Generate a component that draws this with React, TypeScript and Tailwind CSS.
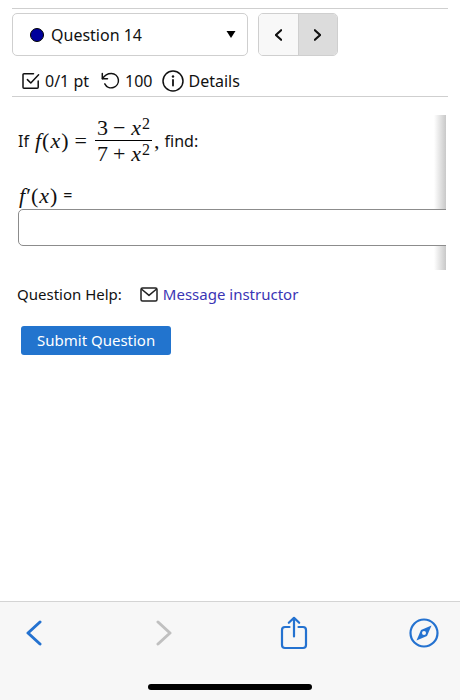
import type { ReactNode } from "react";

const CheckIcon = () => (
    <svg className="w-[18px] h-[18px]" viewBox="0 0 18 18" fill="none" stroke="currentColor" strokeWidth="1.5" strokeLinecap="round" strokeLinejoin="round" aria-hidden="true">
        <path d="M11.5 1.7H2a1 1 0 0 0-1 1v12.600a1 1 0 0 0 1 1h13.200a1 1 0 0 0 1-1V9" />
        <path d="M5.4 7.6l3.400 3.400L16.600 2.800" />
    </svg>
);

const RetryIcon = () => (
    <svg className="w-[19px] h-[18px]" viewBox="0 0 19 18" fill="none" stroke="currentColor" strokeWidth="1.5" strokeLinecap="round" strokeLinejoin="round" aria-hidden="true">
        <path d="M1.300 1.6v5.200h5.200" />
        <path d="M1.500 6.600C3.600 3 6.800 1.400 10.400 1.400a7.200 7.200 0 1 1-6.600 10.400" />
    </svg>
);

const InfoIcon = () => (
    <svg className="w-[22px] h-[22px]" viewBox="0 0 22 22" fill="none" stroke="currentColor" strokeWidth="1.5" strokeLinecap="round" aria-hidden="true">
        <circle cx="11" cy="11" r="10" />
        <path d="M11 10v5.500" strokeWidth="1.800" />
        <circle cx="11" cy="6.500" r="1.200" fill="currentColor" stroke="none" />
    </svg>
);

const MailIcon = () => (
    <svg className="w-[18px] h-[15px]" viewBox="0 0 18 15" fill="none" stroke="#222" strokeWidth="1.5" strokeLinejoin="round" aria-hidden="true">
        <rect x="1" y="1" width="16" height="13" rx="1.500" />
        <path d="M1.400 2l7.600 6.400L16.600 2" />
    </svg>
);

const Chevron = ({ d, className, width }: { d: string; className: string; width: number }) => (
    <svg className={className} viewBox="0 0 16 26" fill="none" stroke="currentColor" strokeWidth={width} strokeLinecap="round" strokeLinejoin="round" aria-hidden="true">
        <path d={d} />
    </svg>
);

const LEFT = "M14 2L2 13l12 11";
const RIGHT = "M2 2l12 11L2 24";

const Var = ({ children }: { children: ReactNode }) => <i className="px-px italic">{children}</i>;

const Term = ({ number, sign }: { number: string; sign: string }) => (
    <span className="flex items-start gap-[5px] leading-[25px]">
        <span>{number}</span>
        <span>{sign}</span>
        <span className="flex items-start">
            <Var>x</Var>
            <sup className="top-0 text-base leading-[18px]">2</sup>
        </span>
    </span>
);

const QuestionNav = () => (
    <div className="flex gap-[10px] pt-1">
        <label className="flex h-[43px] w-[236px] items-center rounded-[5px] border border-[#cfcfcf] pl-[17px] pr-[11px]">
            <span className="mr-[7px] h-[14px] w-[14px] rounded-full border border-black bg-[#00009c]" />
            <select aria-label="Question" className="min-w-0 flex-1 appearance-none bg-transparent">
                <option>Question 14</option>
            </select>
            <svg className="h-[7px] w-[10px]" viewBox="0 0 10 7" aria-hidden="true">
                <path d="M0.500 0h9L5 7z" />
            </svg>
        </label>
        <div className="flex h-[43px] w-20 overflow-hidden rounded-[5px] border border-[#cfcfcf]">
            <button type="button" aria-label="Previous question" className="flex flex-1 items-center justify-center bg-[#f8f8f8]">
                <Chevron d={LEFT} width={5} className="h-3 w-[7px]" />
            </button>
            <button type="button" aria-label="Next question" className="flex flex-1 items-center justify-center border-l border-[#cfcfcf] bg-[#dcdcdc]">
                <Chevron d={RIGHT} width={5} className="h-3 w-[7px]" />
            </button>
        </div>
    </div>
);

const Question = () => (
    <section className="mr-[2px] mt-[18px] overflow-x-clip bg-[linear-gradient(to_left,#c8c8c8,#ffffff_12px)] pb-6 pl-[6px]">
        <div className="flex h-[51px] items-center">
            <span>If</span>
            <span className="ml-[5px] flex items-center font-['Liberation_Serif',serif] text-[22px]">
                <span className="flex gap-[6px]">
                    <span><Var>f</Var>(<Var>x</Var>)</span>
                    <span>=</span>
                </span>
                <span className="ml-2 flex flex-col">
                    <span className="border-b border-black px-[2px]"><Term number="3" sign="−" /></span>
                    <span className="px-[2px]"><Term number="7" sign="+" /></span>
                </span>
                <span className="ml-[2px]">,</span>
            </span>
            <span className="ml-[5px]">find:</span>
        </div>
        <label htmlFor="answer" className="mt-[15px] flex h-7 items-center">
            <span className="font-['Liberation_Serif',serif] text-[22px]"><Var>f</Var>′(<Var>x</Var>)</span>
            <span className="ml-[6px]">=</span>
        </label>
        <div className="-mr-2">
            <input id="answer" type="text" className="block h-[37px] w-full rounded-[5px] border border-[#8c8c8c] bg-white px-2" />
        </div>
    </section>
);

const BrowserBar = () => (
    <footer className="border-t border-[#d4d4d4] bg-[#f7f7f7] pb-[10px] text-[#2472d0]">
        <nav className="flex h-[62px] items-center justify-between pl-[19px] pr-[21px]">
            <button type="button" aria-label="Back" className="flex w-[30px] justify-center">
                <Chevron d={LEFT} width={3} className="h-[26px] w-4" />
            </button>
            <button type="button" aria-label="Forward" disabled className="flex w-[30px] justify-center text-[#c0c0c0]">
                <Chevron d={RIGHT} width={3} className="h-[26px] w-4" />
            </button>
            <button type="button" aria-label="Share" className="flex w-[30px] justify-center">
                <svg className="h-[34px] w-7" viewBox="0 0 28 34" fill="none" stroke="currentColor" strokeWidth="2.200" strokeLinecap="round" strokeLinejoin="round">
                    <path d="M9.500 11H5a3 3 0 0 0-3 3v15a3 3 0 0 0 3 3h18a3 3 0 0 0 3-3V14a3 3 0 0 0-3-3h-4.500" />
                    <path d="M14 20.500V2M8.800 6.800L14 1.800l5.200 5" />
                </svg>
            </button>
            <button type="button" aria-label="Open in browser">
                <svg className="h-[30px] w-[30px]" viewBox="0 0 30 30" fill="none" stroke="currentColor" strokeWidth="2.200">
                    <circle cx="15" cy="15" r="13.500" />
                    <path d="M22.500 7.500l-4.500 10.500-10.500 4.500 4.500-10.500z" fill="currentColor" stroke="none" />
                    <circle cx="15" cy="15" r="2" fill="#f7f7f7" stroke="none" />
                </svg>
            </button>
        </nav>
        <div className="mx-auto mt-5 h-[6px] w-[164px] rounded-full bg-black" />
    </footer>
);

const App = () => {
    return (
        <div className="flex min-h-screen flex-col bg-white font-['Noto_Sans','Open_Sans',sans-serif] text-base text-[#111]">
            <main className="flex-1 px-3 pt-2">
                <header className="border-y border-[#cfcfcf]">
                    <QuestionNav />
                    <div className="flex h-10 items-center pl-[10px] pt-[9px]">
                        <CheckIcon />
                        <span className="ml-[5px]">0/1 pt</span>
                        <span className="ml-3"><RetryIcon /></span>
                        <span className="ml-[5px]">100</span>
                        <button type="button" className="ml-[9px] flex items-center gap-[5px]">
                            <InfoIcon />
                            Details
                        </button>
                    </div>
                </header>
                <Question />
                <div className="mt-3 flex h-6 items-center pl-[5px] text-[15px]">
                    <span>Question Help:</span>
                    <a href="#message" className="ml-[18px] flex items-center gap-[5px] text-[#3a35b5]">
                        <MailIcon />
                        Message instructor
                    </a>
                </div>
                <button type="button" className="ml-[9px] mt-5 h-[29px] rounded-[3px] bg-[#2274ce] px-4 text-[15px] text-white">
                    Submit Question
                </button>
            </main>
            <BrowserBar />
        </div>
    );
};

export default App;
